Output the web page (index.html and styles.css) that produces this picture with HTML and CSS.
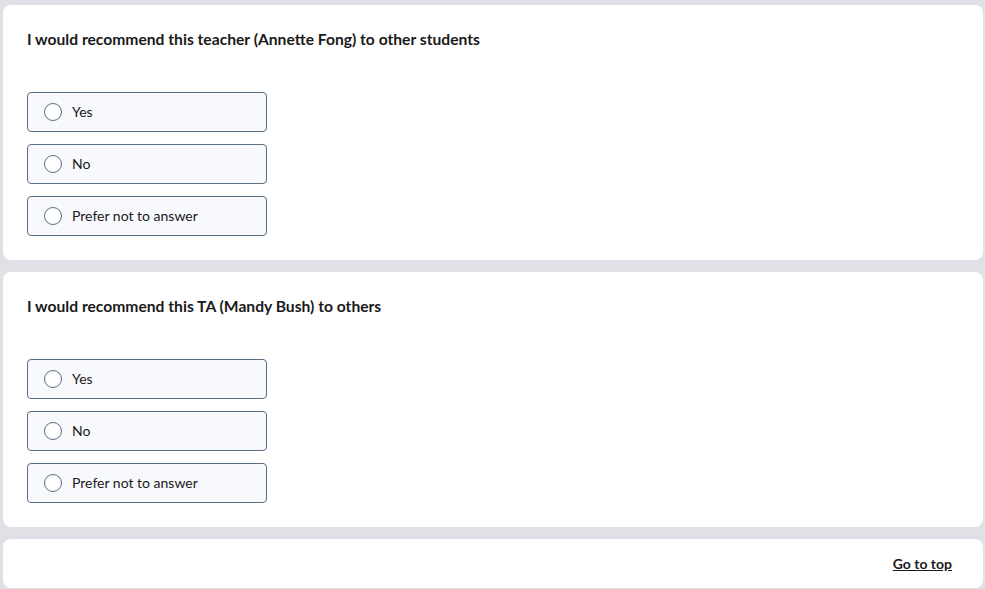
FILE: index.html
```html
<!DOCTYPE html>
<html>
<head>
<meta charset="utf-8">
<link rel="stylesheet" href="styles.css">
</head>
<body>
<main class="page">
  <section class="card">
    <h2 class="question">I would recommend this teacher (Annette Fong) to other students</h2>
    <div class="options">
      <label class="option"><span class="radio"></span><span class="label">Yes</span></label>
      <label class="option"><span class="radio"></span><span class="label">No</span></label>
      <label class="option"><span class="radio"></span><span class="label">Prefer not to answer</span></label>
    </div>
  </section>
  <section class="card">
    <h2 class="question">I would recommend this TA (Mandy Bush) to others</h2>
    <div class="options">
      <label class="option"><span class="radio"></span><span class="label">Yes</span></label>
      <label class="option"><span class="radio"></span><span class="label">No</span></label>
      <label class="option"><span class="radio"></span><span class="label">Prefer not to answer</span></label>
    </div>
  </section>
  <section class="card footer">
    <a class="top-link" href="#">Go to top</a>
  </section>
</main>
</body>
</html>
```
FILE: styles.css
```css
html, body {
  margin: 0;
  padding: 0;
  background: #dfe1e7;
  font-family: Lato, "Open Sans", sans-serif;
  color: #1a1a1a;
}
.page {
  display: flex;
  flex-direction: column;
  gap: 12px;
  padding: 5px 2px 0 3px;
}
.card {
  background: #ffffff;
  border-radius: 8px;
  padding: 23px 24px 24px 24px;
}
.question {
  margin: 0;
  font-size: 15.65px;
  font-weight: 700;
  line-height: 22px;
  color: #1a1a1a;
}
.options {
  display: flex;
  flex-direction: column;
  gap: 12px;
  margin-top: 42px;
}
.option {
  box-sizing: border-box;
  width: 240px;
  height: 40px;
  display: flex;
  align-items: center;
  gap: 10px;
  padding-left: 16px;
  border: 1px solid #5b6d83;
  border-radius: 4px;
  background: #f7f9fc;
  cursor: pointer;
}
.radio {
  box-sizing: border-box;
  width: 18px;
  height: 18px;
  border: 1px solid #5b6d83;
  border-radius: 50%;
  background: #ffffff;
}
.label {
  font-size: 14px;
  line-height: 18px;
  margin-top: -1px;
  color: #1a1a1a;
}
.footer {
  display: flex;
  justify-content: flex-end;
  padding: 16px 31px 15px 24px;
  height: 18px;
}
.top-link {
  font-size: 14px;
  font-weight: 700;
  color: #1a1a1a;
  text-decoration: underline;
}
```
